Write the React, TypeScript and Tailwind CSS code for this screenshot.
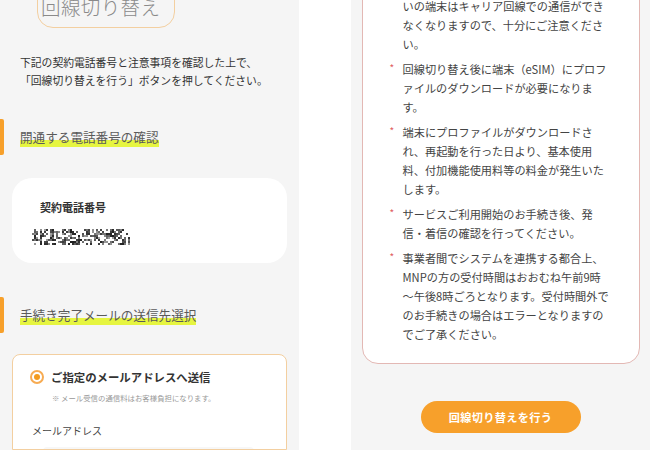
import React from "react";

const jp = "font-['Noto_Sans_CJK_JP','Noto_Sans',sans-serif]";

// mosaic that hides the phone number
function Mosaic() {
  const cells: React.ReactNode[] = [];
  let seed = 7;
  const rnd = () => {
    seed = (seed * 1103515245 + 12345) % 2147483648;
    return seed / 2147483648;
  };
  for (let y = 0; y < 16; y += 2) {
    for (let x = 0; x < 98; x += 2) {
      const v = rnd();
      if (v < 0.55) {
        const g = Math.floor(30 + rnd() * 130);
        cells.push(<rect key={`${x}-${y}`} x={x} y={y} width={2} height={2} fill={`rgb(${g},${g},${g})`} />);
      }
    }
  }
  return (
    <svg width="98" height="16" viewBox="0 0 98 16">
      {cells}
    </svg>
  );
}

function SectionHead({ children }: { children: React.ReactNode }) {
  return (
    <div className="shrink-0 flex items-center h-[36px]">
      <div className="w-[4px] h-full bg-[#f7a02b] rounded-r-[2px]" />
      <span className="ml-[16px] mt-[3px] inline-block text-[12.6px] leading-[14px] pb-[3px] text-[#5a5a5a] bg-[linear-gradient(transparent_58%,#e6f540_58%)]">
        {children}
      </span>
    </div>
  );
}

function Bullet({ lines, hideMark }: { lines: string[]; hideMark?: boolean }) {
  return (
    <li className="flex">
      <span className={`w-[13px] text-[10px] leading-[16px] text-[#e06060] ${hideMark ? "invisible" : ""}`}>*</span>
      <span className="text-[11.2px] leading-[19px] text-[#444]">
        {lines.map((l, i) => (
          <React.Fragment key={i}>
            {l}
            {i < lines.length - 1 && <br />}
          </React.Fragment>
        ))}
      </span>
    </li>
  );
}

export default function App() {
  return (
    <div className={`w-[650px] h-[450px] overflow-hidden flex bg-white ${jp}`}>
      {/* left screen */}
      <div className="w-[299px] h-full bg-[#f5f5f5] flex flex-col">
        <div className="shrink-0 -mt-[22px] ml-[37px] w-[138px] h-[50px] border border-[#f3cfa0] rounded-[16px] flex items-center pl-[3px]">
          <span className="mt-[8px] text-[19.5px] font-light text-[#8a8a8a] tracking-[0.4px]">回線切り替え</span>
        </div>

        <p className="shrink-0 mt-[25px] px-[20px] text-[10.8px] leading-[18px] text-[#333]">
          下記の契約電話番号と注意事項を確認した上で、
          <br />
          「回線切り替えを行う」ボタンを押してください。
        </p>

        <div className="shrink-0 mt-[30px]">
          <SectionHead>開通する電話番号の確認</SectionHead>
        </div>

        <div className="shrink-0 mt-[23px] mx-[12px] h-[85px] rounded-[20px] bg-white pt-[22px]">
          <div className="pl-[28px] text-[11px] leading-[14px] font-bold text-[#333]">契約電話番号</div>
          <div className="pl-[20px] mt-[15px]">
            <Mosaic />
          </div>
        </div>

        <div className="shrink-0 mt-[34px]">
          <SectionHead>手続き完了メールの送信先選択</SectionHead>
        </div>

        <div className="mt-[21px] mx-[12px] flex-1 min-h-0 overflow-hidden border border-[#f3cfa0] rounded-t-[8px] bg-white pt-[15px]">
          <div className="flex items-center pl-[17px]">
            <div className="w-[14px] h-[14px] rounded-full border-[2px] border-[#f7ab52] flex items-center justify-center">
              <div className="w-[6px] h-[6px] rounded-full bg-[#f39a1e]" />
            </div>
            <span className="ml-[7px] text-[11.4px] leading-[14px] font-bold text-[#333]">ご指定のメールアドレスへ送信</span>
          </div>
          <div className="mt-[9px] pl-[39px] text-[7.4px] leading-[10px] text-[#999]">
            ※ メール受信の通信料はお客様負担になります。
          </div>
          <div className="mt-[21px] pl-[19px] text-[10px] leading-[14px] text-[#444]">メールアドレス</div>
          <div className="mt-[9px] ml-[30px] mr-[32px] h-[30px] bg-[#f7f7f7] rounded-[4px]" />
        </div>
      </div>

      <div className="w-[52px] h-full bg-white" />

      {/* right screen */}
      <div className="w-[299px] h-full bg-[#f5f5f5] flex flex-col items-center">
        <div className="shrink-0 -mt-[24px] w-[278px] bg-white border border-[#e3b8b4] rounded-[16px] pt-[20px] pb-[19px] pl-[27px]">
          <ul className="flex flex-col gap-[6px]">
            <Bullet hideMark lines={["いの端末はキャリア回線での通信ができ", "なくなりますので、十分にご注意くださ", "い。"]} />
            <Bullet lines={["回線切り替え後に端末（eSIM）にプロフ", "ァイルのダウンロードが必要になりま", "す。"]} />
            <Bullet lines={["端末にプロファイルがダウンロードさ", "れ、再起動を行った日より、基本使用", "料、付加機能使用料等の料金が発生いた", "します。"]} />
            <Bullet lines={["サービスご利用開始のお手続き後、発", "信・着信の確認を行ってください。"]} />
            <Bullet lines={["事業者間でシステムを連携する都合上、", "MNPの方の受付時間はおおむね午前9時", "～午後8時ごろとなります。受付時間外で", "のお手続きの場合はエラーとなりますの", "でご了承ください。"]} />
          </ul>
        </div>

        <button className="shrink-0 mt-[37px] w-[160px] h-[32px] rounded-full bg-[#f7a02b] text-white text-[11.2px] font-bold tracking-[0.3px]">
          回線切り替えを行う
        </button>
      </div>
    </div>
  );
}
